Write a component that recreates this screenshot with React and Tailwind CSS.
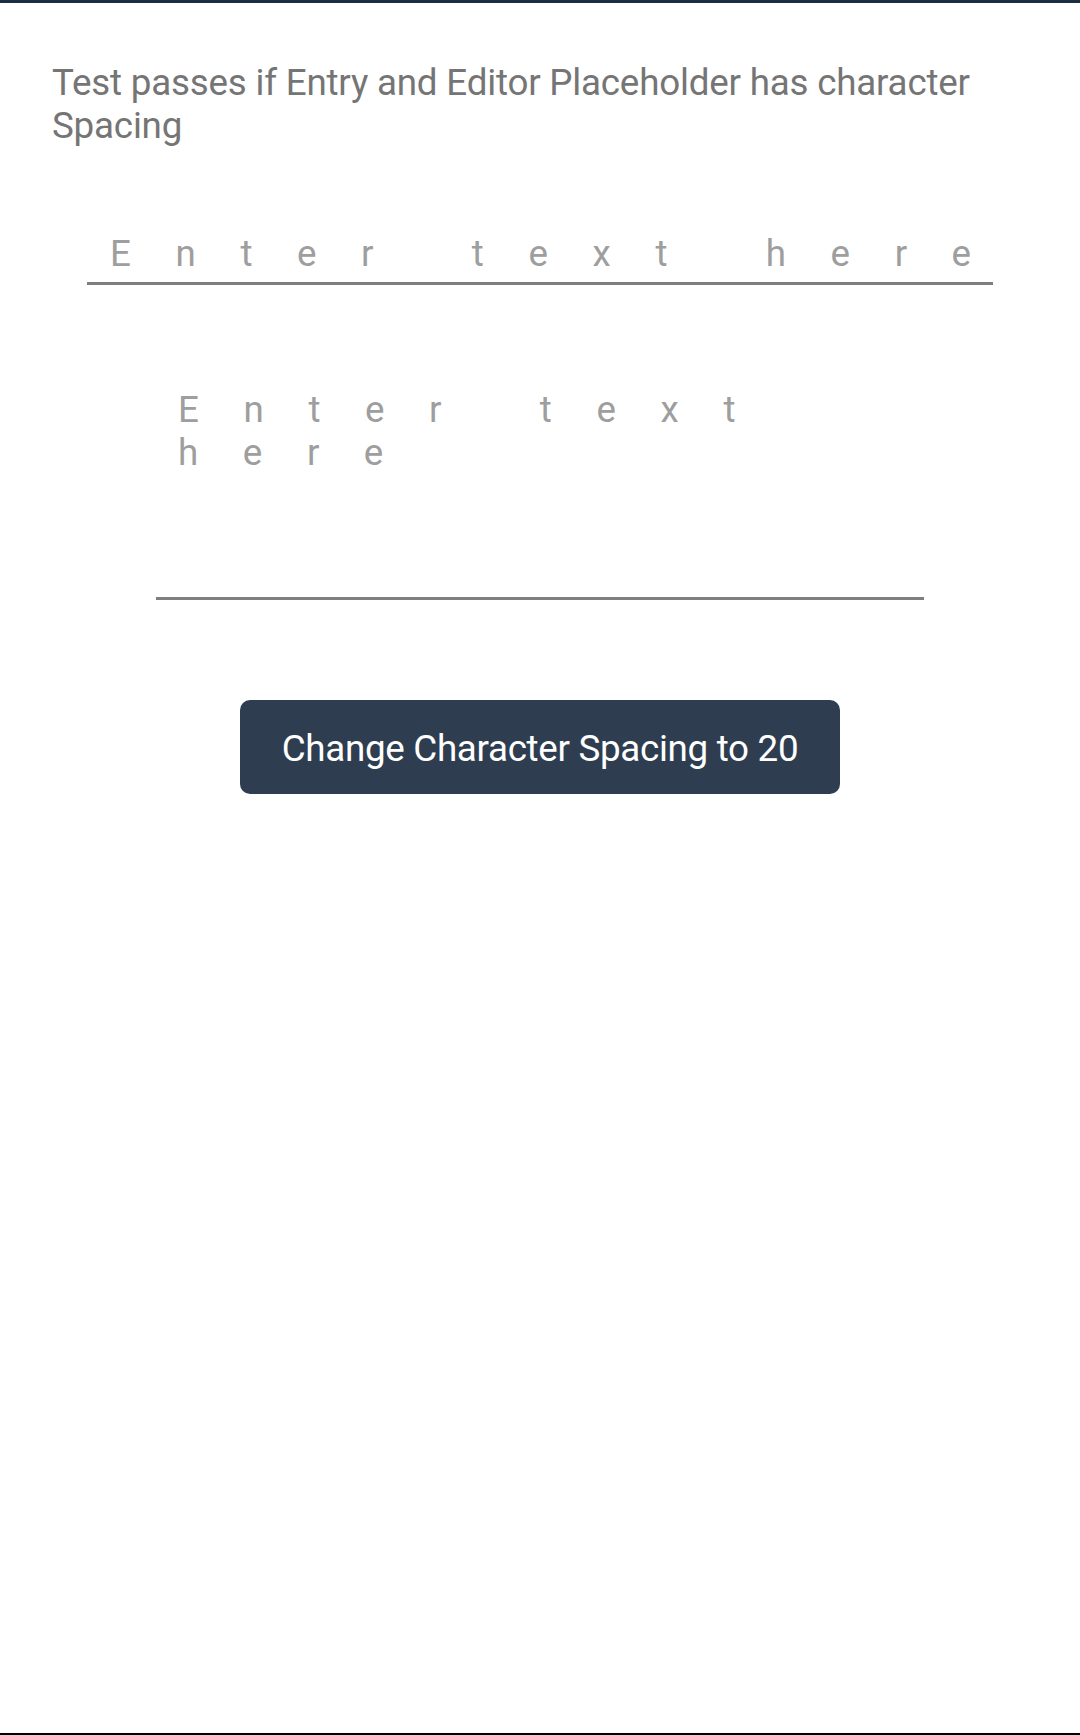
export default function App() {
  return (
    <div className="h-[1735px] flex flex-col bg-white border-t-[3px] border-t-[#1c2d43] border-b-2 border-b-black font-['Roboto','Liberation_Sans',sans-serif]">
      <p className="pl-[52px] pr-[40px] pt-[58px] text-[36.75px] leading-[43px] tracking-[-0.2px] text-[#757575]">
        Test passes if Entry and Editor Placeholder has character Spacing
      </p>

      <div className="flex flex-col items-center">
        <input
          type="text"
          placeholder="Enter text here"
          className="mt-[85px] w-[906px] h-[53px] pl-[23px] pr-[4px] pb-[7px] border-b-[3px] border-[#7f7f7f] bg-transparent outline-none text-[36.75px] leading-[43px] tracking-[44.6px] text-[#212121] placeholder:text-[#9e9e9e]"
        />

        <textarea
          placeholder="Enter text here"
          className="mt-[103px] w-[768px] h-[212px] pl-[22px] pr-[16px] pt-0 border-b-[3px] border-[#7f7f7f] bg-transparent outline-none resize-none overflow-hidden text-[36.75px] leading-[43px] tracking-[44.6px] text-[#212121] placeholder:text-[#9e9e9e]"
        />

        <button
          type="button"
          className="mt-[100px] w-[600px] h-[94px] pt-[4px] rounded-[10px] bg-[#2e3e50] text-white text-[36.75px] leading-none tracking-[-0.3px]"
        >
          Change Character Spacing to 20
        </button>
      </div>
    </div>
  )
}
